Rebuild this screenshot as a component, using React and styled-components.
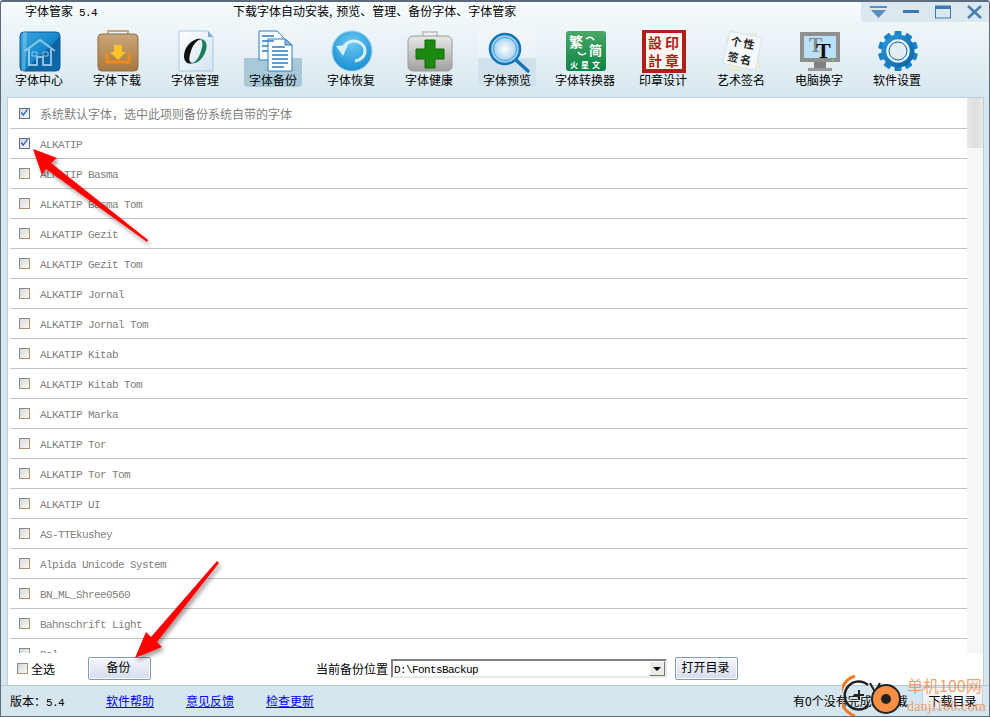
import React from 'react'
import styled, { createGlobalStyle } from 'styled-components'

const cjk = `"Noto Sans CJK SC", "Liberation Sans", sans-serif`
const mono = `"Liberation Mono", "Noto Sans CJK SC", monospace`

const GlobalStyle = createGlobalStyle`
  html, body {
    margin: 0;
    padding: 0;
    background: #fff;
  }
`

const Window = styled.div`
  position: relative;
  width: 990px;
  height: 717px;
  box-sizing: border-box;
  display: flex;
  flex-direction: column;
  overflow: hidden;
  border: 1px solid #5d6c7c;
  border-top-width: 2px;
  border-radius: 3px 3px 0 0;
  background: linear-gradient(#f6fbfd 0, #d8e7ef 96px, #d6e6ee 100%);
  font-family: ${cjk};
  font-size: 12px;
  color: #000;
`

const TitleBar = styled.div`
  height: 27px;
  display: flex;
  align-items: flex-start;
  flex: none;
`

const AppTitle = styled.div`
  margin-left: 24px;
  width: 208px;
  line-height: 18px;
`

const Version = styled.span`
  font-family: ${mono};
  font-size: 11px;
  letter-spacing: -0.6px;
`

const Slogan = styled.div`
  line-height: 18px;
`

const Comma = styled.span`
  margin-right: 4px;
`

const WindowControls = styled.div`
  margin-left: auto;
  width: 128px;
  height: 20px;
  display: flex;
  align-items: center;
  gap: 16px;
  padding-left: 9px;
  box-sizing: border-box;
  background: #dbe8ef;
  border-radius: 0 0 0 4px;
`

const Toolbar = styled.div`
  height: 68px;
  flex: none;
  display: flex;
  align-items: flex-start;
  margin-left: -1px;
`

const Tool = styled.div`
  position: relative;
  width: 78px;
  height: 58px;
  display: flex;
  flex-direction: column;
  align-items: center;
  flex: none;

  &::before {
    content: '';
    display: ${(p) => (p.$state ? 'block' : 'none')};
    position: absolute;
    left: 10px;
    width: 58px;
    top: 0;
    height: 58px;
    border-radius: 4px;
    background: ${(p) =>
      p.$state === 'active'
        ? 'linear-gradient(#f1f6f9 0, #e6eff5 29px, #a9c9d9 29px, #a9c9d9 100%)'
        : 'linear-gradient(#f2f7fa 0, #eaf2f7 29px, #cfe1eb 29px, #d3e3ec 100%)'};
  }
`

const ToolIcon = styled.svg`
  position: relative;
  width: 48px;
  height: 44px;
  margin-left: 2px;
  margin-top: 1px;
  flex: none;
`

const ToolLabel = styled.div`
  position: relative;
  margin-top: -1px;
  line-height: 14px;
  white-space: nowrap;
`

const Panel = styled.div`
  flex: none;
  height: 588px;
  margin: 0 5px 0 6px;
  display: flex;
  flex-direction: column;
  background: #fff;
  border: 1px solid #bccdd6;
  border-bottom: none;
  box-sizing: border-box;
`

const ListArea = styled.div`
  height: 555px;
  display: flex;
  flex: none;
  overflow: hidden;
`

const List = styled.div`
  flex: 1;
  padding: 1px 0 0 2px;
  overflow: hidden;
`

const Row = styled.div`
  height: 30px;
  box-sizing: border-box;
  display: flex;
  align-items: center;
  padding-left: 9px;
  gap: 10px;
  border-bottom: 1px solid #bfc2c3;
  color: #808080;
`

const RowName = styled.span`
  font-family: ${mono};
  font-size: 11px;
  letter-spacing: -0.6px;
  padding-top: 2px;
`

const Scrollbar = styled.div`
  width: 16px;
  flex: none;
  background: #f6f6f6;
`

const ScrollThumb = styled.div`
  height: 50px;
  background: linear-gradient(90deg, #e8e8e8, #dedede 50%, #e9e9e9);
`

const Check = styled.span`
  width: 11px;
  height: 11px;
  box-sizing: border-box;
  flex: none;
  display: inline-flex;
  border: 1px solid;
  border-color: ${(p) =>
    p.$checked ? '#5e6f8e' : '#7d8c8c #b08f68 #b08f68 #7d8c8c'};
  background: linear-gradient(135deg, #d8d8d4, #f8f8f6);
`

const CheckMark = styled.svg`
  width: 13px;
  height: 11px;
  margin: -2px 0 0 -1px;
`

const BottomBar = styled.div`
  flex: 1;
  display: flex;
  align-items: center;
  padding: 0 0 1px 9px;
`

const SelectAll = styled.label`
  display: flex;
  align-items: center;
  gap: 3px;
  width: 71px;
`

const Button = styled.div`
  box-sizing: border-box;
  width: 63px;
  height: 23px;
  display: flex;
  align-items: center;
  justify-content: center;
  padding: 0 2px 4px 0;
  border: 1px solid #7e9db2;
  border-radius: 2px;
  background: linear-gradient(#f5f7fb, #d5dcec);
  box-shadow: inset 0 0 0 1px #fff;
`

const LocationLabel = styled.div`
  margin-left: 165px;
  width: 75px;
  white-space: nowrap;
`

const PathSelect = styled.div`
  box-sizing: border-box;
  width: 276px;
  height: 19px;
  margin-right: 8px;
  display: flex;
  align-items: center;
  justify-content: space-between;
  border: 2px solid;
  border-color: #808080 #e8e8e8 #e8e8e8 #808080;
  padding-left: 1px;
`

const PathText = styled.span`
  font-family: ${mono};
  font-size: 11px;
  letter-spacing: -0.6px;
  padding-top: 2px;
`

const SelectArrow = styled.div`
  width: 16px;
  height: 15px;
  display: flex;
  align-items: center;
  justify-content: center;
  background: #ecebe6;
  border: 1px solid;
  border-color: #fff #777 #777 #fff;
  box-sizing: border-box;

  &::after {
    content: '';
    border: 4px solid transparent;
    border-top: 4px solid #000;
    border-bottom: none;
  }
`

const Footer = styled.div`
  flex: 1;
  display: flex;
  align-items: center;
  padding: 0 0 1px 9px;
  background: #d6e6ee;
  border-top: 1px solid #b7c9d0;
`

const FooterVersion = styled.div`
  width: 96px;
  white-space: nowrap;
`

const HelpLink = styled.a`
  width: 80px;
  color: #0000ee;
  text-decoration: underline;
`

const Status = styled.div`
  margin-left: auto;
  width: 129px;
  white-space: nowrap;
`

const DownloadButton = styled.div`
  box-sizing: border-box;
  width: 61px;
  height: 22px;
  align-self: flex-start;
  margin: 1px 6px 0 0;
  padding-top: 5px;
  line-height: 16px;
  text-align: center;
  border-radius: 2px;
  background: linear-gradient(#f8fbfc, #e4ecf2);
  border: 1px solid #c4d4dc;
`

const ArrowLayer = styled.svg`
  position: absolute;
  left: -1px;
  top: -2px;
  width: 990px;
  height: 717px;
  pointer-events: none;
`

const Watermark = styled.div`
  position: absolute;
  right: 1px;
  bottom: -1px;
  width: 146px;
  height: 42px;
  display: flex;
  pointer-events: none;
`

const WatermarkLogo = styled.svg`
  flex: none;
  width: 64px;
  height: 42px;
`

const WatermarkText = styled.div`
  display: flex;
  flex-direction: column;
  align-items: flex-start;
  margin-left: 1px;
  color: rgba(242, 120, 40, 0.7);
  white-space: nowrap;
`

const WatermarkCn = styled.div`
  font-size: 16px;
  line-height: 21px;
`

const WatermarkEn = styled.div`
  font-family: "Liberation Serif", serif;
  font-size: 14px;
  line-height: 17px;
  letter-spacing: 0.2px;
  margin-top: 2px;
`

const fonts = [
  'ALKATIP',
  'ALKATIP Basma',
  'ALKATIP Basma Tom',
  'ALKATIP Gezit',
  'ALKATIP Gezit Tom',
  'ALKATIP Jornal',
  'ALKATIP Jornal Tom',
  'ALKATIP Kitab',
  'ALKATIP Kitab Tom',
  'ALKATIP Marka',
  'ALKATIP Tor',
  'ALKATIP Tor Tom',
  'ALKATIP UI',
  'AS-TTEkushey',
  'Alpida Unicode System',
  'BN_ML_Shree0560',
  'Bahnschrift Light',
  'Bal',
]

function CheckBox({ checked }) {
  return (
    <Check $checked={checked}>
      {checked && (
        <CheckMark viewBox="0 0 13 11">
          <path d="M3 5.5 L5.5 9 L11 1.5" fill="none" stroke="#3560d8" strokeWidth="1.8" />
        </CheckMark>
      )}
    </Check>
  )
}

const HomeIcon = () => (
  <g>
    <defs>
      <linearGradient id="homeBg" x1="0" y1="0" x2="1" y2="1">
        <stop offset="0" stopColor="#38a8e0" />
        <stop offset="0.55" stopColor="#1585c8" />
        <stop offset="0.56" stopColor="#0f629f" />
        <stop offset="1" stopColor="#0b6cae" />
      </linearGradient>
    </defs>
    <rect x="4" y="2" width="40" height="39" rx="4" fill="url(#homeBg)" stroke="#0c5a94" />
    <path d="M7 2 L11 2 L9 41 L6 41 Z" fill="#fff" opacity="0.25" />
    <path d="M9 21 L24 10 L39 21 M13 18 V35 H21 V27 H27 V35 H35 V18" fill="none" stroke="#a9d8f2" strokeWidth="2" opacity="0.8" />
    <path d="M16 22 H21 V26 H16 Z M27 22 H32 V26 H27 Z" fill="none" stroke="#a9d8f2" opacity="0.8" />
  </g>
)

const DownloadIcon = () => (
  <g>
    <defs>
      <linearGradient id="boxBg" x1="0" y1="0" x2="0" y2="1">
        <stop offset="0" stopColor="#c9a77a" />
        <stop offset="1" stopColor="#a8783f" />
      </linearGradient>
    </defs>
    <path d="M14 5 V1 H34 V5" fill="none" stroke="#c2a888" strokeWidth="2" />
    <rect x="4" y="4" width="40" height="37" rx="4" fill="url(#boxBg)" stroke="#8f6c42" />
    <path d="M13 23 V32 H35 V23" fill="none" stroke="#f08a1c" strokeWidth="3" />
    <path d="M20 15 H28 V22 H32 L24 30 L16 22 H20 Z" fill="#fbc22a" />
  </g>
)

const ManageIcon = () => (
  <g>
    <defs>
      <linearGradient id="pageBg" x1="0" y1="0" x2="1" y2="1">
        <stop offset="0" stopColor="#ffffff" />
        <stop offset="1" stopColor="#d3e4f3" />
      </linearGradient>
    </defs>
    <path d="M7 1 H36 L41 7 V41 H7 Z" fill="url(#pageBg)" stroke="#a9c8e2" />
    <path d="M36 1 V7 H41 Z" fill="#7eaed4" />
    <path
      d="M30 9 C22 7 12 16 12 26 C12 32 16 35 21 33 C16 33 17 27 19 21 C21 14 26 9 30 9 Z"
      fill="#111"
    />
    <path
      d="M28 9 C33 9 36 13 34 20 C32 28 25 35 19 33 C24 33 27 27 29 21 C31 15 31 11 28 9 Z"
      fill="#1a7f58"
    />
  </g>
)

const BackupIcon = () => (
  <g stroke="#2d7fc0">
    <path d="M9 1 H27 L33 7 V30 H9 Z" fill="#f4faff" />
    <path d="M18 9 H35 L42 15 V41 H18 Z" fill="#fff" />
    <path d="M35 9 V15 H42 Z" fill="#8dbbe0" />
    <path d="M12 6 H24 M12 11 H24 M12 16 H18 M12 21 H18 M22 17 H35 M22 21 H38 M22 25 H38 M22 29 H38 M22 33 H38 M22 37 H34" fill="none" strokeWidth="1.6" />
  </g>
)

const RestoreIcon = () => (
  <g>
    <defs>
      <radialGradient id="restoreBg" cx="0.5" cy="0.3" r="0.8">
        <stop offset="0" stopColor="#6cc9f2" />
        <stop offset="1" stopColor="#0f86cf" />
      </radialGradient>
    </defs>
    <circle cx="24" cy="21" r="20" fill="url(#restoreBg)" stroke="#8ed0f2" />
    <path d="M15 20 A11 10 0 1 1 27 31" fill="none" stroke="#d6effb" strokeWidth="3" />
    <path d="M8 16 L20 15 L15 26 Z" fill="#d6effb" />
  </g>
)

const HealthIcon = () => (
  <g>
    <defs>
      <linearGradient id="caseBg" x1="0" y1="0" x2="0" y2="1">
        <stop offset="0" stopColor="#e8e8e6" />
        <stop offset="1" stopColor="#a0a09e" />
      </linearGradient>
    </defs>
    <path d="M17 7 V2 H31 V7" fill="none" stroke="#c8c8c6" strokeWidth="2" />
    <rect x="2" y="6" width="44" height="35" rx="5" fill="url(#caseBg)" stroke="#9a9a98" />
    <path d="M19 10 H29 V19 H38 V29 H29 V38 H19 V29 H10 V19 H19 Z" fill="#1a8a10" stroke="#106808" />
  </g>
)

const PreviewIcon = () => (
  <g>
    <defs>
      <radialGradient id="lensBg">
        <stop offset="0" stopColor="#ffffff" />
        <stop offset="1" stopColor="#8fc6ec" />
      </radialGradient>
    </defs>
    <circle cx="21" cy="19" r="15" fill="url(#lensBg)" stroke="#1275b8" strokeWidth="2.5" />
    <circle cx="21" cy="19" r="11.5" fill="none" stroke="#3d9bd8" />
    <path d="M21 12 L17 16 M21 12 L25 16 M21 26 L17 22 M21 26 L25 22" stroke="#d6ecfa" />
    <path d="M32 30 L44 41" stroke="#1275b8" strokeWidth="3.5" strokeLinecap="round" />
  </g>
)

const ConvertIcon = () => (
  <g fontFamily={cjk} fontWeight="700" fill="#fff">
    <defs>
      <linearGradient id="convBg" x1="0" y1="0" x2="0" y2="1">
        <stop offset="0" stopColor="#4aa866" />
        <stop offset="1" stopColor="#0c8446" />
      </linearGradient>
    </defs>
    <rect x="4" y="1" width="40" height="40" rx="3" fill="url(#convBg)" />
    <text x="7" y="17" fontSize="14">繁</text>
    <text x="27" y="25" fontSize="13">简</text>
    <path d="M24 9 Q29 5 32 10 M24 23 Q19 27 16 22" fill="none" stroke="#fff" strokeWidth="1.5" />
    <text x="8" y="38" fontSize="8" letterSpacing="3">火星文</text>
  </g>
)

const SealIcon = () => (
  <g fontFamily={cjk} fontWeight="700" fill="#b02018">
    <rect x="4" y="1" width="40" height="40" fill="#fdf6f0" stroke="#b02018" strokeWidth="4" />
    <text x="8" y="18" fontSize="14">設</text>
    <text x="25" y="18" fontSize="14">印</text>
    <text x="8" y="36" fontSize="14">計</text>
    <text x="25" y="36" fontSize="14">章</text>
  </g>
)

const SignIcon = () => (
  <g>
    <rect x="10" y="5" width="30" height="34" fill="#f6eecb" stroke="#e4e4dc" transform="rotate(-6 25 22)" />
    <rect x="8" y="4" width="33" height="33" fill="#f4f8fb" stroke="#d8e2e8" transform="rotate(12 24 21)" />
    <g fontFamily={cjk} fontWeight="700" fill="#222" transform="rotate(12 24 21)">
      <text x="11" y="17" fontSize="11">个</text>
      <text x="24" y="17" fontSize="11">性</text>
      <text x="11" y="33" fontSize="11">签</text>
      <text x="24" y="33" fontSize="11">名</text>
    </g>
  </g>
)

const MonitorIcon = () => (
  <g>
    <rect x="4" y="2" width="40" height="30" fill="#8f8f8d" />
    <rect x="8" y="6" width="32" height="22" fill="#b9e2f8" />
    <rect x="36" y="29" width="2" height="2" fill="#6fd24a" />
    <rect x="18" y="32" width="12" height="6" fill="#808080" />
    <rect x="12" y="38" width="24" height="3" fill="#999" />
    <g fontFamily={`"Liberation Serif", serif`}>
      <text x="13" y="22" fontSize="20" fontWeight="700" fill="#8a8a8a">T</text>
      <text x="20" y="28" fontSize="22" fontWeight="700" fill="#111">T</text>
    </g>
  </g>
)

const GearIcon = () => (
  <g>
    <defs>
      <linearGradient id="gearBg" x1="0" y1="0" x2="1" y2="1">
        <stop offset="0" stopColor="#2a9ade" />
        <stop offset="1" stopColor="#0c5f9f" />
      </linearGradient>
    </defs>
    {Array.from({ length: 10 }, (_, i) => (
      <rect key={i} x="20.5" y="1" width="7" height="8" rx="1" fill="#1683c8" transform={`rotate(${i * 36} 24 21)`} />
    ))}
    <circle cx="24" cy="21" r="16.5" fill="url(#gearBg)" />
    <circle cx="24" cy="21" r="10.5" fill="#e3eef4" stroke="#e6f4fc" strokeWidth="2.5" />
    <circle cx="24" cy="21" r="9" fill="#e3eef4" stroke="#0d5f9e" strokeWidth="1" />
  </g>
)

const tools = [
  { label: '字体中心', Icon: HomeIcon },
  { label: '字体下载', Icon: DownloadIcon },
  { label: '字体管理', Icon: ManageIcon },
  { label: '字体备份', Icon: BackupIcon, state: 'active' },
  { label: '字体恢复', Icon: RestoreIcon },
  { label: '字体健康', Icon: HealthIcon },
  { label: '字体预览', Icon: PreviewIcon, state: 'hover' },
  { label: '字体转换器', Icon: ConvertIcon },
  { label: '印章设计', Icon: SealIcon },
  { label: '艺术签名', Icon: SignIcon },
  { label: '电脑换字', Icon: MonitorIcon },
  { label: '软件设置', Icon: GearIcon },
]

function App() {
  return (
    <>
      <GlobalStyle />
      <Window>
        <TitleBar>
          <AppTitle>
            字体管家<Version> 5.4</Version>
          </AppTitle>
          <Slogan>下载字体自动安装<Comma>,</Comma>预览、管理、备份字体、字体管家</Slogan>
          <WindowControls>
            <svg width="17" height="14" viewBox="0 0 17 14">
              <rect x="0" y="1" width="17" height="2" fill="#5a8dc0" />
              <path d="M1 5 H16 L8.5 13 Z" fill="#5a8dc0" />
            </svg>
            <svg width="16" height="14" viewBox="0 0 16 14">
              <rect x="0" y="5" width="16" height="3" fill="#3f78b0" />
            </svg>
            <svg width="16" height="14" viewBox="0 0 16 14">
              <rect x="0.5" y="1" width="15" height="12" fill="none" stroke="#3f78b0" />
              <rect x="0" y="1" width="16" height="3" fill="#3f78b0" />
            </svg>
            <svg width="15" height="14" viewBox="0 0 15 14">
              <path d="M1 1 L14 13 M14 1 L1 13" stroke="#4a7fb0" strokeWidth="2.6" />
            </svg>
          </WindowControls>
        </TitleBar>
        <Toolbar>
          {tools.map(({ label, Icon, state }) => (
            <Tool key={label} $state={state}>
              <ToolIcon viewBox="0 0 48 44">
                <Icon />
              </ToolIcon>
              <ToolLabel>{label}</ToolLabel>
            </Tool>
          ))}
        </Toolbar>
        <Panel>
          <ListArea>
            <List>
              <Row>
                <CheckBox checked />
                <span>系统默认字体，选中此项则备份系统自带的字体</span>
              </Row>
              {fonts.map((name, i) => (
                <Row key={name}>
                  <CheckBox checked={i === 0} />
                  <RowName>{name}</RowName>
                </Row>
              ))}
            </List>
            <Scrollbar>
              <ScrollThumb />
            </Scrollbar>
          </ListArea>
          <BottomBar>
            <SelectAll>
              <CheckBox />
              全选
            </SelectAll>
            <Button>备份</Button>
            <LocationLabel>当前备份位置</LocationLabel>
            <PathSelect>
              <PathText>D:\FontsBackup</PathText>
              <SelectArrow />
            </PathSelect>
            <Button>打开目录</Button>
          </BottomBar>
        </Panel>
        <Footer>
          <FooterVersion>
            版本：<Version>5.4</Version>
          </FooterVersion>
          <HelpLink>软件帮助</HelpLink>
          <HelpLink>意见反馈</HelpLink>
          <HelpLink>检查更新</HelpLink>
          <Status>有0个没有完成的下载</Status>
          <DownloadButton>下载目录</DownloadButton>
        </Footer>
        <ArrowLayer viewBox="0 0 990 717">
          <defs>
            <filter id="arrowShadow" x="-20%" y="-20%" width="150%" height="150%">
              <feDropShadow dx="2" dy="3" stdDeviation="2" floodColor="#000" floodOpacity="0.4" />
            </filter>
          </defs>
          <g fill="#f00" filter="url(#arrowShadow)">
            <path d="M33 149 L57 158 L51 163 L148 240 L147 242 L46 169 L42 175 Z" />
            <path d="M135 658 L146 632 L151 637 L217 561 L219 563 L157 642 L162 647 Z" />
          </g>
        </ArrowLayer>
        <Watermark>
          <WatermarkLogo viewBox="0 0 64 42">
            <path d="M13 1 A21 21 0 0 0 13 41" fill="none" stroke="#f47a20" strokeWidth="3" />
            <path d="M26 10 A14 14 0 1 0 26 31" fill="none" stroke="#222" strokeWidth="2.5" />
            <path d="M12 20 H22 M17 15 V25" stroke="#222" strokeWidth="2" />
            <path d="M28 8 L33 17 L38 8" fill="none" stroke="#222" strokeWidth="2" />
            <circle cx="44" cy="24" r="14" fill="#f98f45" stroke="#222" strokeWidth="2" />
            <circle cx="44" cy="24" r="5" fill="#222" />
          </WatermarkLogo>
          <WatermarkText>
            <WatermarkCn>单机100网</WatermarkCn>
            <WatermarkEn>danji100.com</WatermarkEn>
          </WatermarkText>
        </Watermark>
      </Window>
    </>
  )
}

export default App
